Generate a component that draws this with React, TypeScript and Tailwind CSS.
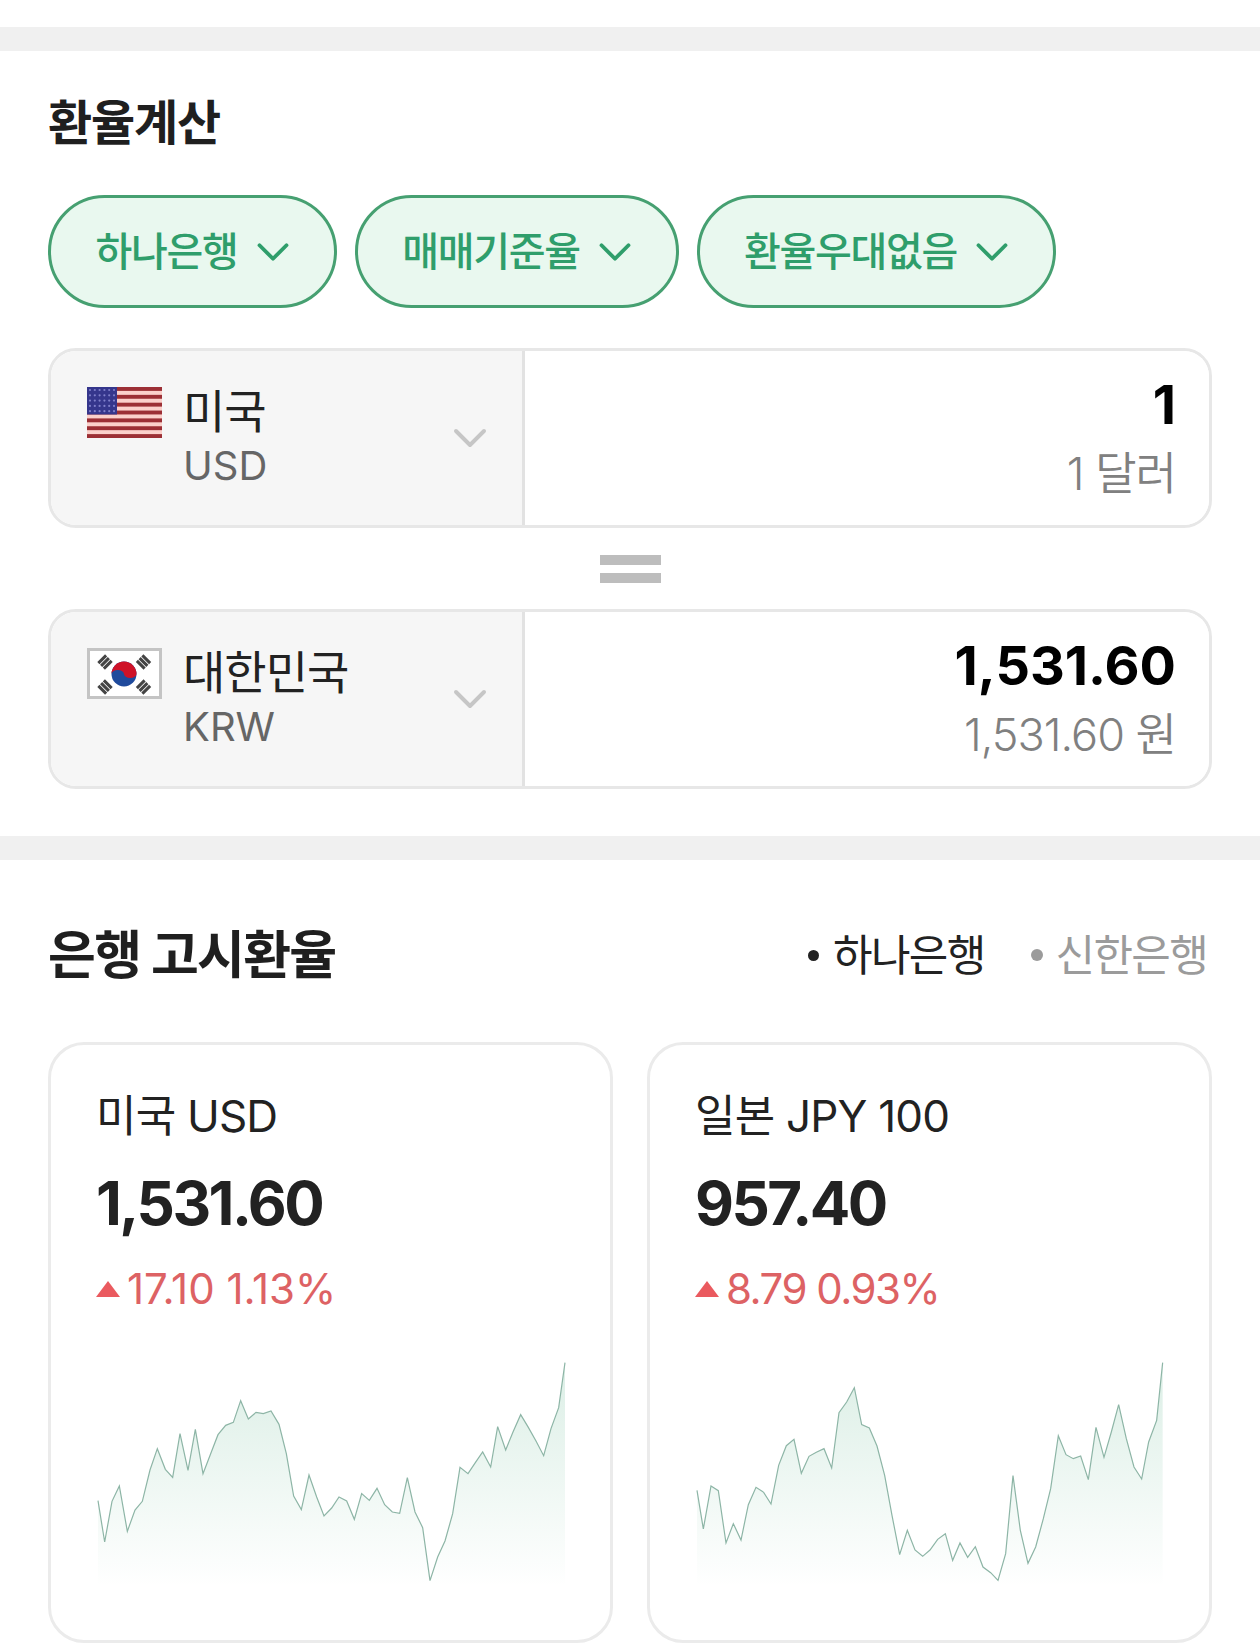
import React from 'react';
import { ChevronDown } from 'lucide-react';

const FONT = "font-['Inter','Noto_Sans_CJK_KR',sans-serif]";

const usdLine: number[][] = [[52,476],[72,600],[94,478],[116,432],[140,568],[163,504],[185,478],[208,384],[230,320],[254,382],[276,406],[298,275],[322,385],[344,262],[367,395],[390,335],[412,278],[435,250],[458,241],[480,176],[503,231],[526,211],[548,215],[571,207],[595,247],[617,335],[639,462],[662,503],[685,399],[708,465],[730,522],[753,498],[775,465],[798,477],[821,532],[843,455],[866,475],[889,439],[912,488],[935,510],[957,514],[980,407],[1003,510],[1026,557],[1048,716],[1071,645],[1093,597],[1116,515],[1138,376],[1162,395],[1184,362],[1206,330],[1230,375],[1251,254],[1275,324],[1297,270],[1320,218],[1343,256],[1366,297],[1389,341],[1411,260],[1434,197],[1453,62]];

const jpyLine: number[][] = [[50,445],[69,561],[92,432],[114,446],[137,603],[159,545],[182,594],[204,488],[227,436],[250,451],[272,486],[295,370],[318,311],[341,292],[363,394],[386,343],[408,331],[431,320],[454,378],[476,212],[499,180],[522,137],[544,248],[567,258],[590,312],[613,400],[635,520],[658,638],[681,565],[704,624],[727,643],[749,624],[772,592],[795,575],[817,655],[839,603],[862,646],[885,614],[908,675],[931,692],[953,715],[976,635],[998,401],[1020,565],[1043,664],[1066,615],[1089,530],[1111,440],[1134,281],[1157,338],[1179,350],[1201,342],[1224,413],[1247,256],[1271,346],[1293,270],[1315,188],[1338,290],[1361,375],[1384,411],[1405,300],[1429,235],[1447,62]];

const Sparkline = ({ id, points }: { id: string; points: number[][] }) => {
  const x0 = points[0][0];
  const x1 = points[points.length - 1][0];
  const line = points.map((p) => p.join(',')).join(' ');
  return (
    <svg width={(x1 - x0) / 3} height={225} viewBox={`${x0} 60 ${x1 - x0} 675`} preserveAspectRatio="none" className="block overflow-visible">
      <defs>
        <linearGradient id={id} x1="0" y1="0" x2="0" y2="1">
          <stop offset="0%" stopColor="#2f9e6b" stopOpacity={0.17} />
          <stop offset="100%" stopColor="#2f9e6b" stopOpacity={0} />
        </linearGradient>
      </defs>
      <polygon points={`${x0},735 ${line} ${x1},735`} fill={`url(#${id})`} />
      <polyline points={line} fill="none" stroke="#8db5a6" strokeWidth={3.6} />
    </svg>
  );
};

const UsFlag = () => (
  <svg width="75" height="51" viewBox="0 0 75 51" className="block shrink-0 mt-[1px]">
    <rect width="75" height="51" fill="#fbd0cb" />
    {[0, 1, 2, 3, 4, 5, 6].map((i) => (
      <rect key={i} y={i * 7.85} width="75" height="3.9" fill="#9c2f35" />
    ))}
    <rect width="30" height="27.5" fill="#35368c" />
    {[0, 1, 2, 3, 4].map((r) =>
      [0, 1, 2, 3, 4, 5].map((c) => (
        <circle key={`${r}-${c}`} cx={3 + c * 4.8} cy={3 + r * 5.3} r="1.1" fill="#7f7fca" />
      ))
    )}
  </svg>
);

const Trigram = ({ x, y, rot }: { x: number; y: number; rot: number }) => (
  <g transform={`translate(${x} ${y}) rotate(${rot})`}>
    <rect x="-5.5" y="-5.4" width="11" height="3" fill="#444" />
    <rect x="-5.5" y="-1.5" width="11" height="3" fill="#444" />
    <rect x="-5.5" y="2.4" width="11" height="3" fill="#444" />
  </g>
);

const KrFlag = () => (
  <svg width="75" height="51" viewBox="0 0 75 51" className="block shrink-0 mt-[1px]">
    <rect x="1.5" y="1.5" width="72" height="48" fill="#fff" stroke="#c4c4c4" strokeWidth="3" />
    <Trigram x={18} y={14} rot={-45} />
    <Trigram x={56.5} y={14} rot={45} />
    <Trigram x={18} y={39} rot={45} />
    <Trigram x={56.5} y={39} rot={-45} />
    <circle cx="37" cy="26" r="12.5" fill="#1f4a9c" />
    <path d="M24.5 26a12.5 12.5 0 0 1 25 0a6.25 4 0 0 1-12.5 0a6.25 4 0 0 0-12.5 0z" fill="#cf1228" />
  </svg>
);

const FilterChip = ({ label, width }: { label: string; width: string }) => (
  <button className={`${width} h-[113px] flex items-center justify-center gap-[8px] rounded-full border-[3px] border-[#46a071] bg-[#e9f8ef] text-[#2f9e6b] text-[40px] font-medium tracking-[-1.3px]`}>
    <span>{label}</span>
    <ChevronDown size={54} strokeWidth={1.7} className="shrink-0 mr-[-10px]" />
  </button>
);

const ConvertRow = ({ flag, name, code, amount, sub }: { flag: React.ReactNode; name: string; code: string; amount: string; sub: string }) => (
  <div className="flex h-[180px] rounded-[28px] border-[3px] border-[#e7e7e7] overflow-hidden">
    <div className="w-[474px] shrink-0 flex bg-[#f6f6f6] border-r-[3px] border-[#e2e2e2] pl-[36px] pr-[24px] pt-[35px]">
      {flag}
      <div className="ml-[21px] flex-1 mt-[-4px]">
        <div className="text-[46px] leading-[58px] text-[#222] tracking-[-1px]">{name}</div>
        <div className="text-[40px] leading-[51px] text-[#666]">{code}</div>
      </div>
      <ChevronDown size={56} strokeWidth={1.7} className="text-[#c6c6c6] mt-[24px] shrink-0" />
    </div>
    <div className="flex-1 bg-white flex flex-col items-end pr-[33px] pt-[24px]">
      <div className="text-[54px] leading-[60px] font-bold text-black">{amount}</div>
      <div className="text-[45px] leading-[50px] mt-[14px] text-[#808080] tracking-[-1px] font-[350]">{sub}</div>
    </div>
  </div>
);

type RateCardProps = { title: string; rate: string; change: string; changeTracking: string; id: string; points: number[][] };

const RateCard = ({ title, rate, change, changeTracking, id, points }: RateCardProps) => (
  <div className="h-[601px] rounded-[36px] border-[3px] border-[#ebebeb] bg-white pl-[45px] pt-[45px]">
    <div className="text-[44px] leading-[52px] text-[#222] tracking-[-0.8px]">{title}</div>
    <div className="text-[60px] leading-[70px] mt-[26px] font-bold text-[#222] tracking-[-2.5px]">{rate}</div>
    <div className={`flex items-center mt-[26px] text-[42px] leading-[50px] text-[#dd6264] ${changeTracking}`}>
      <span className="w-0 h-0 mr-[7px] border-x-[12px] border-x-transparent border-b-[16px] border-b-[#ea5a5f]" />
      {change}
    </div>
    <div className="mt-[48px] ml-[2px]">
      <Sparkline id={id} points={points} />
    </div>
  </div>
);

export default function App() {
  return (
    <div className={`${FONT} w-[1260px] h-[1648px] bg-white overflow-hidden`}>
      <div className="h-[27px]" />
      <div className="h-[24px] bg-[#f0f0f0]" />

      <section className="px-[48px] pt-[39px] pb-[47px]">
        <h2 className="text-[48px] leading-[66px] font-bold text-[#1f1f1f] tracking-[-1.2px]">환율계산</h2>
        <div className="flex gap-[18px] mt-[39px]">
          <FilterChip label="하나은행" width="w-[289px]" />
          <FilterChip label="매매기준율" width="w-[324px]" />
          <FilterChip label="환율우대없음" width="w-[359px]" />
        </div>
        <div className="mt-[40px]">
          <ConvertRow flag={<UsFlag />} name="미국" code="USD" amount="1" sub="1 달러" />
        </div>
        <div className="h-[81px] flex flex-col items-center justify-center gap-[8px]">
          <div className="w-[61px] h-[10px] bg-[#bdbdbd]" />
          <div className="w-[61px] h-[10px] bg-[#bdbdbd]" />
        </div>
        <ConvertRow flag={<KrFlag />} name="대한민국" code="KRW" amount="1,531.60" sub="1,531.60 원" />
      </section>

      <div className="h-[24px] bg-[#f0f0f0]" />

      <section className="px-[48px] pt-[62px]">
        <div className="flex items-center justify-between h-[66px]">
          <h2 className="text-[52px] font-bold text-[#1f1f1f] tracking-[-1.7px] mt-[2px]">은행 고시환율</h2>
          <div className="flex gap-[46px] text-[43px] tracking-[-1.7px] pr-[5px]">
            <span className="flex items-center gap-[14px] text-[#222]">
              <span className="w-[11px] h-[11px] rounded-full bg-[#222]" />
              하나은행
            </span>
            <span className="flex items-center gap-[13px] text-[#9b9b9b]">
              <span className="w-[12px] h-[12px] rounded-full bg-[#9b9b9b]" />
              신한은행
            </span>
          </div>
        </div>
        <div className="grid grid-cols-2 gap-[34px] mt-[54px]">
          <RateCard title="미국 USD" rate="1,531.60" change="17.10 1.13%" changeTracking="tracking-[0px]" id="usdFill" points={usdLine} />
          <RateCard title="일본 JPY 100" rate="957.40" change="8.79 0.93%" changeTracking="tracking-[-1.5px]" id="jpyFill" points={jpyLine} />
        </div>
      </section>
    </div>
  );
}
